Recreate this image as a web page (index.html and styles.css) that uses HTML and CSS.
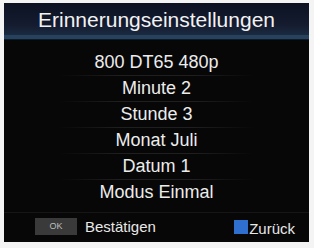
FILE: index.html
```html
<!DOCTYPE html>
<html>
<head>
<meta charset="utf-8">
<link rel="stylesheet" href="styles.css">
</head>
<body>
<div class="panel">
  <div class="header">Erinnerungseinstellungen</div>
  <div class="list">
    <div class="row">800 DT65 480p</div>
    <div class="row">Minute 2</div>
    <div class="row">Stunde 3</div>
    <div class="row">Monat Juli</div>
    <div class="row">Datum 1</div>
    <div class="row last">Modus Einmal</div>
  </div>
  <div class="footer">
    <div class="hint">
      <span class="okkey">OK</span>
      <span class="label up">Bestätigen</span>
    </div>
    <div class="hint">
      <span class="bluekey"></span>
      <span class="label down">Zurück</span>
    </div>
  </div>
</div>
</body>
</html>
```
FILE: styles.css
```css
html, body {
  margin: 0;
  padding: 0;
  background: #f4f4f4;
}
body {
  width: 314px;
  height: 248px;
  overflow: hidden;
  font-family: "Liberation Sans", Arial, sans-serif;
}
.panel {
  margin: 3px 5px 0 4px;
  width: 305px;
  height: 239px;
  background: #070707;
  display: flex;
  flex-direction: column;
  color: #ececec;
}
.header {
  height: 29px;
  padding-top: 3px;
  border-bottom: 4px solid #26425e;
  box-shadow: 0 1px 0 #0d1a28;
  background: linear-gradient(#0c1222, #151c30 70%, #1a2a40);
  font-size: 21px;
  line-height: 28px;
  text-align: center;
  color: #f2f2f2;
}
.list {
  padding-top: 11px;
  display: flex;
  flex-direction: column;
}
.row {
  box-sizing: border-box;
  height: 26px;
  line-height: 25px;
  font-size: 18px;
  text-align: center;
  border-bottom: 1px solid transparent;
  border-image: linear-gradient(90deg, transparent 18%, #1f1f1f 38%, #1f1f1f 62%, transparent 82%) 1;
}
.row.last {
  border-image: none;
  border-bottom: 0;
}
.footer {
  margin-top: 6px;
  padding: 5px 14px 0 31px;
  border-top: 1px solid #161616;
  display: flex;
  justify-content: space-between;
  align-items: flex-start;
}
.hint {
  display: flex;
  align-items: flex-start;
}
.okkey {
  width: 42px;
  height: 17px;
  background: #3a3a3a;
  color: #bdbdbd;
  font-size: 9px;
  line-height: 17px;
  text-align: center;
  margin-right: 8px;
}
.bluekey {
  width: 14px;
  height: 14px;
  background: #2f6fd0;
  margin-right: 1px;
  margin-top: 2px;
}
.label {
  font-size: 15px;
  line-height: 18px;
  color: #e8e8e8;
}
.label.down {
  margin-top: 2px;
}
```
